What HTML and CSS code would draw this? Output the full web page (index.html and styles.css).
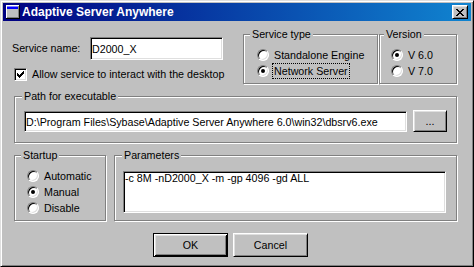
FILE: index.html
```html
<!DOCTYPE html>
<html lang="en">

<head>
    <meta charset="UTF-8">
    <meta name="viewport" content="width=device-width, initial-scale=1.0">
    <title>Adaptive Server Anywhere</title>
    <link rel="stylesheet" href="styles.css">
</head>

<body>
    <div class="window">
        <div class="titlebar">
            <svg class="app-icon" width="14" height="14" viewBox="0 0 14 14">
                <rect x="0" y="0" width="14" height="14" fill="#000"/>
                <rect x="0" y="0" width="13" height="13" fill="#fff"/>
                <rect x="1" y="1" width="12" height="12" fill="#808080"/>
                <rect x="1" y="1" width="11" height="11" fill="#c0c0c0"/>
                <rect x="1" y="1" width="11" height="3" fill="#0000ff"/>
                <rect x="1" y="1" width="11" height="1" fill="#8080ff"/>
            </svg>
            <span class="title">Adaptive Server Anywhere</span>
            <button class="close-btn" type="button">
                <svg width="8" height="7" viewBox="0 0 8 7">
                    <path d="M0 0h2v1h-2zM6 0h2v1h-2zM1 1h2v1h-2zM5 1h2v1h-2zM2 2h4v1h-4zM3 3h2v1h-2zM2 4h4v1h-4zM1 5h2v1h-2zM5 5h2v1h-2zM0 6h2v1h-2zM6 6h2v1h-2z" fill="#000"/>
                </svg>
            </button>
        </div>

        <div class="client">
            <div class="top-row">
                <div class="service-col">
                    <div class="name-row">
                        <label for="service-name">Service name:</label>
                        <input type="text" id="service-name" class="field name-field" value="D2000_X">
                    </div>
                    <label class="check-row">
                        <span class="checkbox">
                            <svg width="7" height="7" viewBox="0 0 7 7">
                                <path d="M6 0h1v1h-1zM5 1h2v1h-2zM0 2h1v1h-1zM4 2h3v1h-3zM0 3h2v1h-2zM3 3h3v1h-3zM0 4h5v1h-5zM1 5h3v1h-3zM2 6h1v1h-1z" fill="#000"/>
                            </svg>
                        </span>
                        <span>Allow service to interact with the desktop</span>
                    </label>
                </div>

                <fieldset class="group group-type">
                    <legend>Service type</legend>
                    <div class="group-body">
                        <label class="radio-row"><span class="radio"></span><span class="radio-text">Standalone Engine</span></label>
                        <label class="radio-row"><span class="radio checked"></span><span class="radio-text focused">Network Server</span></label>
                    </div>
                </fieldset>

                <fieldset class="group group-version">
                    <legend>Version</legend>
                    <div class="group-body">
                        <label class="radio-row"><span class="radio checked"></span><span class="radio-text">V 6.0</span></label>
                        <label class="radio-row"><span class="radio"></span><span class="radio-text">V 7.0</span></label>
                    </div>
                </fieldset>
            </div>

            <fieldset class="group group-path">
                <legend>Path for executable</legend>
                <div class="group-body path-body">
                    <input type="text" class="field path-field" value="D:\Program Files\Sybase\Adaptive Server Anywhere 6.0\win32\dbsrv6.exe">
                    <button class="btn browse-btn" type="button">...</button>
                </div>
            </fieldset>

            <div class="bottom-row">
                <fieldset class="group group-startup">
                    <legend>Startup</legend>
                    <div class="group-body">
                        <label class="radio-row"><span class="radio"></span><span class="radio-text">Automatic</span></label>
                        <label class="radio-row"><span class="radio checked"></span><span class="radio-text">Manual</span></label>
                        <label class="radio-row"><span class="radio"></span><span class="radio-text">Disable</span></label>
                    </div>
                </fieldset>

                <fieldset class="group group-params">
                    <legend>Parameters</legend>
                    <div class="group-body">
                        <textarea class="field params-field">-c 8M -nD2000_X -m -gp 4096 -gd ALL</textarea>
                    </div>
                </fieldset>
            </div>

            <div class="buttons">
                <button class="btn btn-default" type="button">OK</button>
                <button class="btn" type="button">Cancel</button>
            </div>
        </div>
    </div>
</body>

</html>
```

FILE: styles.css
```css
body {
    margin: 0;
    background: #c0c0c0;
}

.window {
    width: 474px;
    height: 267px;
    box-sizing: border-box;
    display: flex;
    flex-direction: column;
    padding: 2px;
    border: 1px solid;
    border-color: #dfdfdf #000 #000 #dfdfdf;
    box-shadow: inset 1px 1px #fff, inset -1px -1px #808080;
    background: #c0c0c0;
    font-family: "Liberation Sans", Arial, sans-serif;
    font-size: 10.7px;
    line-height: 13px;
    color: #000;
}

/* Title bar */
.titlebar {
    height: 18px;
    flex: none;
    display: flex;
    align-items: center;
    background: linear-gradient(to right, #000080, #1084d0);
    color: #fff;
}

.app-icon {
    margin: 0 2px 0 3px;
    flex: none;
}

.title {
    flex: 1;
    font-size: 12px;
    font-weight: bold;
}

.close-btn {
    width: 16px;
    height: 14px;
    margin-right: 3px;
    padding: 0;
    display: flex;
    align-items: center;
    justify-content: center;
    background: #c0c0c0;
    border: 1px solid;
    border-color: #fff #000 #000 #fff;
    box-shadow: inset 1px 1px #dfdfdf, inset -1px -1px #808080;
}

/* Client area */
.client {
    flex: 1;
    padding: 7px 14px 0 11px;
}

.top-row {
    display: flex;
    height: 56px;
}

.service-col {
    width: 229px;
    flex: none;
}

.name-row {
    display: flex;
    align-items: center;
    margin: 9px 0 0 -2px;
}

.name-row label {
    width: 78px;
}

.field {
    box-sizing: border-box;
    margin: 0;
    padding: 0 1px;
    border: 1px solid;
    border-color: #808080 #fff #fff #808080;
    box-shadow: inset 1px 1px #000, inset -1px -1px #dfdfdf;
    background: #fff;
    color: #000;
    font: inherit;
    outline: none;
}

.name-field {
    width: 133px;
    height: 23px;
}

.check-row {
    display: flex;
    align-items: center;
    gap: 5px;
    margin-top: 8px;
}

.checkbox {
    width: 13px;
    height: 13px;
    box-sizing: border-box;
    flex: none;
    display: flex;
    align-items: center;
    justify-content: center;
    border: 1px solid;
    border-color: #808080 #fff #fff #808080;
    box-shadow: inset 1px 1px #000, inset -1px -1px #dfdfdf;
    background: #fff;
}

/* Group boxes */
.group {
    box-sizing: border-box;
    min-width: 0;
    margin: 0;
    padding: 0;
    border: 1px solid #808080;
    box-shadow: inset 1px 1px #fff, 1px 1px #fff;
}

.group legend {
    margin-left: 6px;
    padding: 0 2px;
    line-height: 13px;
    background: #c0c0c0;
}

.group-body {
    padding-top: 6px;
}

.group-type {
    width: 135px;
}

.group-type .group-body {
    padding-left: 13px;
}

.group-version {
    width: 78px;
    margin-left: 1px;
}

.group-version legend {
    margin-left: 4px;
}

.group-version .group-body {
    padding-left: 11px;
}

.radio-row {
    display: flex;
    align-items: center;
    height: 16px;
}

.radio {
    width: 12px;
    height: 12px;
    box-sizing: border-box;
    flex: none;
    display: flex;
    align-items: center;
    justify-content: center;
    border-radius: 50%;
    border: 1px solid;
    border-color: #808080 #fff #fff #808080;
    box-shadow: inset 1px 1px #000, inset -1px -1px #dfdfdf;
    background: #fff;
}

.radio.checked::after {
    content: "";
    width: 4px;
    height: 4px;
    border-radius: 50%;
    background: #000;
}

.radio-text {
    margin-left: 3px;
    padding: 0 1px;
    line-height: 14px;
    border: 1px dotted transparent;
}

.radio-text.focused {
    border-color: #000;
}

/* Path */
.group-path {
    height: 53px;
    margin-top: 6px;
}

.group-path legend,
.group-params legend {
    margin-left: 7px;
}

.path-body {
    display: flex;
    align-items: flex-start;
    gap: 6px;
    padding: 7px 9px 0;
}

.path-field {
    flex: 1;
    height: 21px;
    margin-top: 1px;
}

/* Startup and parameters */
.bottom-row {
    display: flex;
    height: 72px;
    margin-top: 6px;
}

.group-startup {
    width: 92px;
}

.group-startup .group-body {
    padding-left: 12px;
}

.group-params {
    width: 343px;
    margin-left: 8px;
}

.group-params .group-body {
    padding: 9px 10px 0 8px;
}

.params-field {
    display: block;
    width: 100%;
    height: 42px;
    resize: none;
    overflow: hidden;
}

/* Buttons */
.btn {
    box-sizing: border-box;
    margin: 0;
    padding: 0;
    background: #c0c0c0;
    color: #000;
    font: inherit;
    border: 1px solid;
    border-color: #fff #000 #000 #fff;
    box-shadow: inset 1px 1px #dfdfdf, inset -1px -1px #808080;
}

.browse-btn {
    width: 34px;
    height: 22px;
    flex: none;
}

.buttons {
    display: flex;
    gap: 5px;
    margin: 12px 0 0 139px;
}

.buttons .btn {
    width: 75px;
    height: 24px;
}

.btn-default {
    border-color: #000;
    box-shadow: inset 1px 1px #fff, inset -1px -1px #000, inset 2px 2px #dfdfdf, inset -2px -2px #808080;
}
```
